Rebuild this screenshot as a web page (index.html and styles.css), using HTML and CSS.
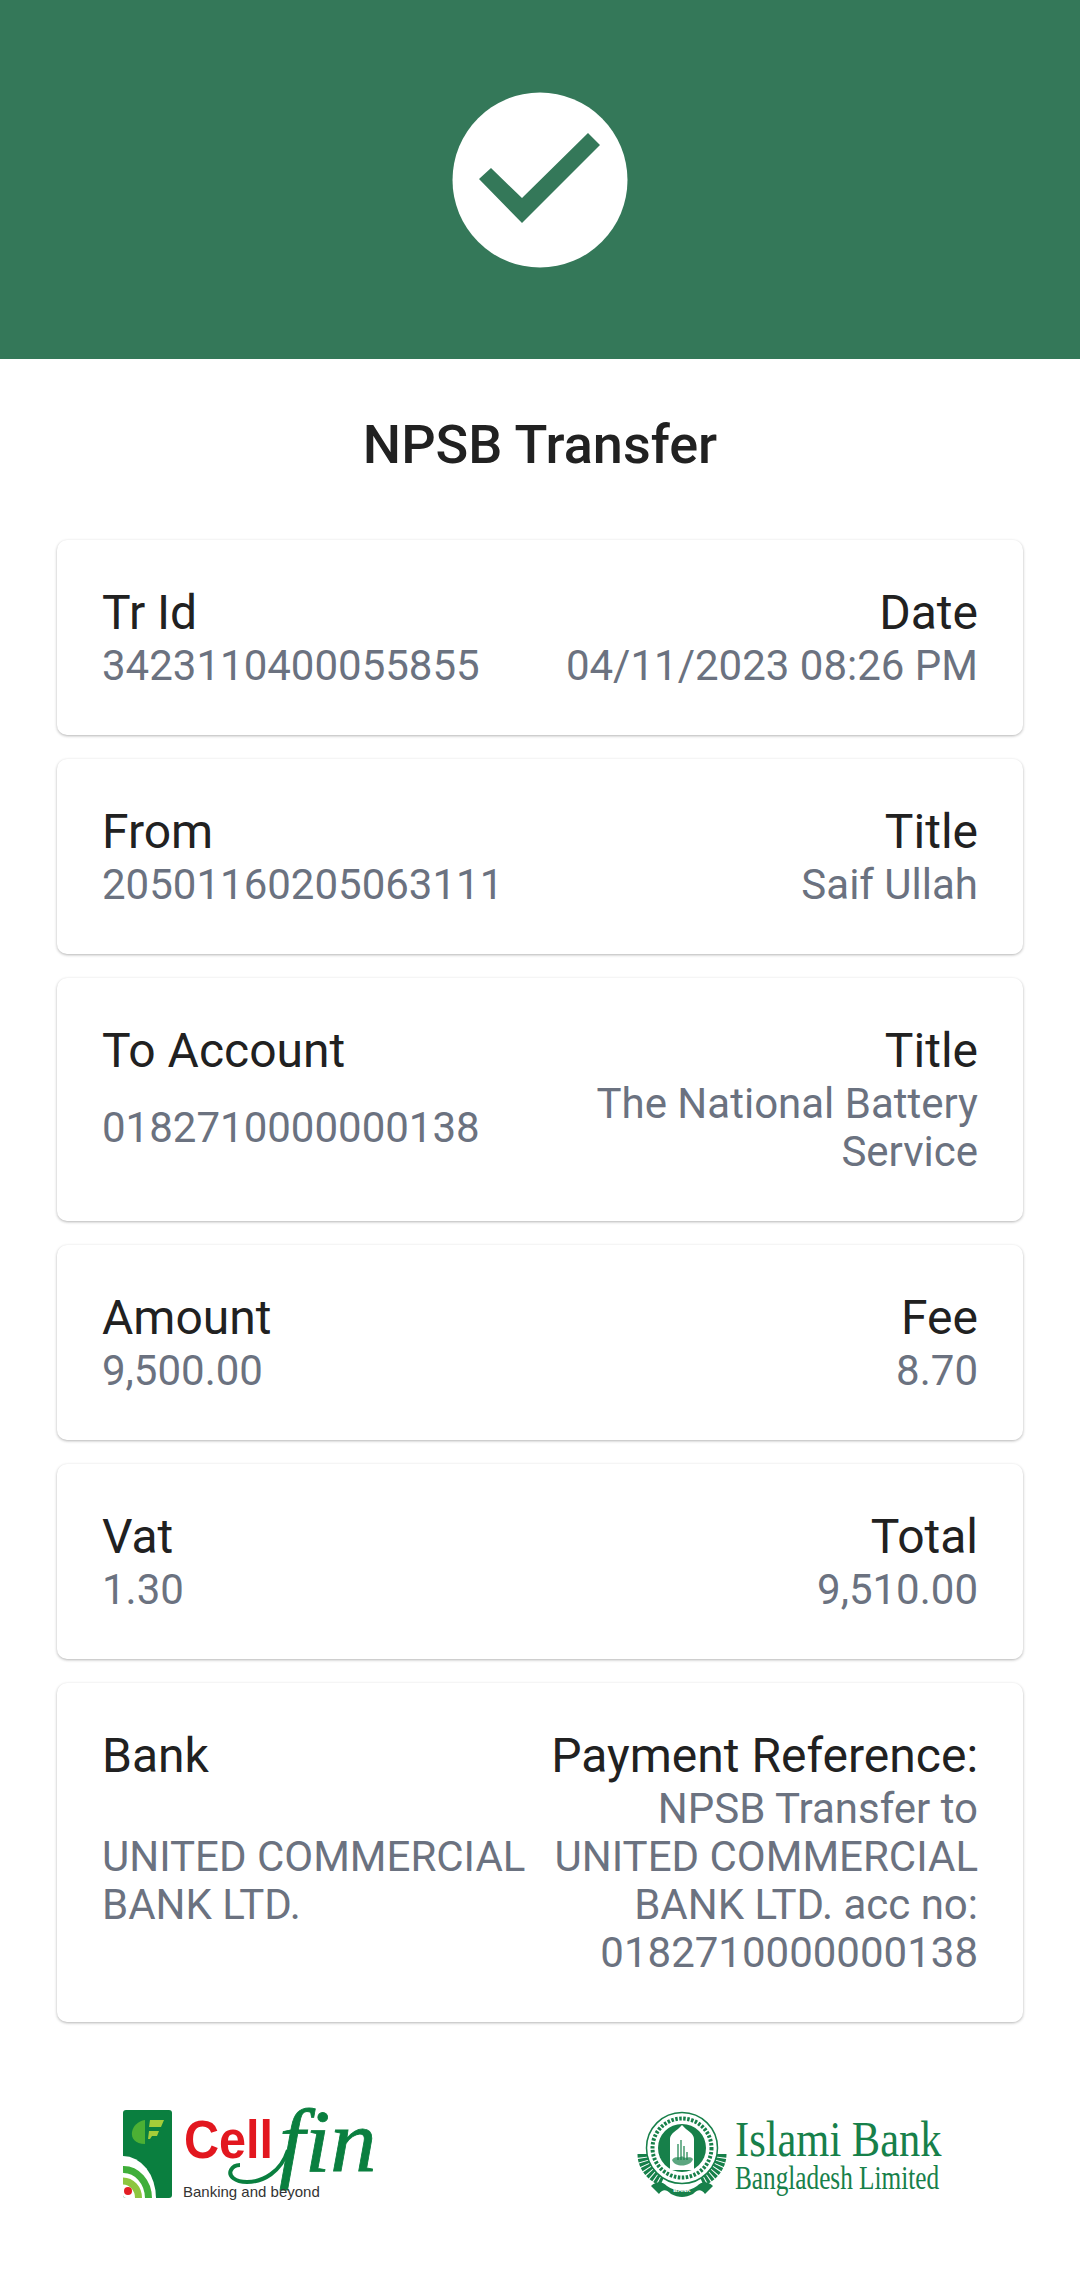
FILE: index.html
```html
<!DOCTYPE html>
<html lang="en">
<head>
    <meta charset="UTF-8">
    <meta name="viewport" content="width=device-width, initial-scale=1.0">
    <title>NPSB Transfer</title>
    <link rel="stylesheet" href="styles.css">
</head>
<body>
    <div class="banner">
        <svg class="check" width="176" height="176" viewBox="0 0 176 176">
            <circle cx="88" cy="88" r="87.5" fill="#fff"/>
            <polygon points="27,87 39,76 70,106 136,41 148,53 70,131" fill="#347859"/>
        </svg>
    </div>

    <h1 class="page-title">NPSB Transfer</h1>

    <div class="card-list">
        <div class="card">
            <div class="label">Tr Id</div>
            <div class="label right">Date</div>
            <div class="value">3423110400055855</div>
            <div class="value right">04/11/2023 08:26 PM</div>
        </div>
        <div class="card">
            <div class="label">From</div>
            <div class="label right">Title</div>
            <div class="value">20501160205063111</div>
            <div class="value right">Saif Ullah</div>
        </div>
        <div class="card">
            <div class="label">To Account</div>
            <div class="label right">Title</div>
            <div class="value">0182710000000138</div>
            <div class="value right">The National Battery Service</div>
        </div>
        <div class="card">
            <div class="label">Amount</div>
            <div class="label right">Fee</div>
            <div class="value">9,500.00</div>
            <div class="value right">8.70</div>
        </div>
        <div class="card">
            <div class="label">Vat</div>
            <div class="label right">Total</div>
            <div class="value">1.30</div>
            <div class="value right">9,510.00</div>
        </div>
        <div class="card">
            <div class="label">Bank</div>
            <div class="label right">Payment Reference:</div>
            <div class="value">UNITED COMMERCIAL BANK LTD.</div>
            <div class="value right">NPSB Transfer to UNITED COMMERCIAL BANK LTD. acc no: 0182710000000138</div>
        </div>
    </div>

    <div class="logos">
        <svg class="logo-cellfin" width="256" height="112" viewBox="0 -20 256 112">
            <rect x="0" y="0" width="49" height="88" rx="3" fill="#0a7f3f"/>
            <path d="M22 10 V34 C12 34 8 28 9 22 C10 16 15 11 22 10 Z" fill="#4cb034"/>
            <path d="M27 10 H41 L38 17 H26 Z M26 21 H36 L34 26 H29 L27 29 H25 Z" fill="#a5cd39"/>
            <path d="M0 46 A33 42 0 0 1 33 88 H3 Q0 88 0 85 Z" fill="#fff"/>
            <path d="M0 59.5 A25 29 0 0 1 25.5 88" fill="none" stroke="#3fae3a" stroke-width="7"/>
            <path d="M0 71 A15.5 17 0 0 1 15.5 88" fill="none" stroke="#8dc63f" stroke-width="7"/>
            <circle cx="5" cy="81" r="4" fill="#e31e24"/>
            <text class="cell-word" x="61" y="48" transform="translate(61 48) scale(0.9 1) translate(-61 -48)">Cell</text>
            <path d="M165 40 C158 62 140 72 124 72 C112 72 105 66 108 60 C110 56 114 55 117 55" fill="none" stroke="#0a7f3f" stroke-width="4"/>
            <text class="fin-word" x="156" y="61" transform="translate(156 61) scale(1.05 1) translate(-156 -61)">fin</text>
            <text class="tagline" x="60" y="87">Banking and beyond</text>
        </svg>
        <svg class="logo-islami" width="308" height="88" viewBox="0 0 308 88">
            <path d="M6 44 C6 56 14 66 26 71 M84 44 C84 56 76 66 64 71" fill="none" stroke="#17804a" stroke-width="11" stroke-dasharray="3 1"/>
            <path d="M14 76 C20 70 26 72 30 76 C38 82 52 82 60 76 C64 72 70 70 76 76 L68 84 C64 78 60 80 56 84 C48 88 42 88 34 84 C30 80 26 78 22 84 Z" fill="#17804a"/>
            <circle cx="45" cy="38" r="35.5" fill="#fff" stroke="#17804a" stroke-width="1.5"/>
            <circle cx="45" cy="38" r="29.5" fill="none" stroke="#17804a" stroke-width="4" stroke-dasharray="2.5 1.5"/>
            <circle cx="45" cy="38" r="24" fill="#17804a"/>
            <path d="M33 60 V29 C33 23 40 21 45 15 C50 21 57 23 57 29 V60 Z" fill="#fff"/>
            <path d="M41 50 V34 M44 50 V30 M47 50 V36 M50 50 V42" fill="none" stroke="#17804a" stroke-width="1.6" opacity="0.75"/>
            <path d="M35 50 C38 45 42 49 45 46 C48 50 52 45 56 49 C54 57 38 58 35 50 Z" fill="#17804a" opacity="0.7"/>
            <text class="bank-ribbon" x="45" y="82" text-anchor="middle">BANK</text>
            <text class="islami-word" x="98" y="46" transform="translate(98 46) scale(0.85 1) translate(-98 -46)">Islami Bank</text>
            <text class="bangladesh-word" x="98" y="79" transform="translate(98 79) scale(0.743 1) translate(-98 -79)">Bangladesh Limited</text>
        </svg>
    </div>
</body>
</html>
```

FILE: styles.css
```css
body {
    font-family: Roboto, Arial, sans-serif;
    margin: 0;
    background-color: #fff;
    color: #212121;
}
.banner {
    display: flex;
    justify-content: center;
    align-items: center;
    height: 359px;
    background-color: #347859;
}
.check {
    display: block;
}
.page-title {
    margin: 0;
    padding-top: 54px;
    height: 127px;
    box-sizing: border-box;
    text-align: center;
    font-size: 54px;
    line-height: 64px;
    font-weight: 500;
}
.card-list {
    display: flex;
    flex-direction: column;
    gap: 24px;
    margin: 54px 57px 0;
}
.card {
    display: grid;
    grid-template-columns: 1fr 1fr;
    padding: 44px 45px 45px;
    background-color: #fff;
    border-radius: 10px;
    box-shadow: 0 1px 3px rgba(0, 0, 0, 0.3);
}
.label {
    font-size: 48px;
    line-height: 58px;
}
.value {
    align-self: center;
    font-size: 42px;
    line-height: 48px;
    color: #6b7280;
}
.right {
    text-align: right;
}
.logos {
    display: flex;
    justify-content: space-between;
    align-items: flex-start;
    margin-top: 68px;
    padding: 0 135px 0 123px;
}
.logo-islami {
    margin-top: 20px;
}
.logo-islami text {
    font-family: "Liberation Serif", serif;
}
.logo-cellfin .cell-word {
    font-family: "Liberation Sans", sans-serif;
    font-size: 54px;
    font-weight: bold;
    fill: #e2171f;
}
.logo-cellfin .fin-word {
    font-family: "Liberation Serif", serif;
    font-size: 88px;
    font-style: italic;
    fill: #0a7f3f;
    stroke: #0a7f3f;
    stroke-width: 0.8px;
}
.logo-cellfin .tagline {
    font-family: "Liberation Sans", sans-serif;
    font-size: 15px;
    fill: #333;
}
.logo-islami .bank-ribbon {
    font-family: "Liberation Sans", sans-serif;
    font-size: 6px;
    font-weight: bold;
    fill: #fff;
}
.logo-islami .islami-word {
    font-size: 50px;
    fill: #17804a;
}
.logo-islami .bangladesh-word {
    font-size: 34px;
    fill: #17804a;
}
```
